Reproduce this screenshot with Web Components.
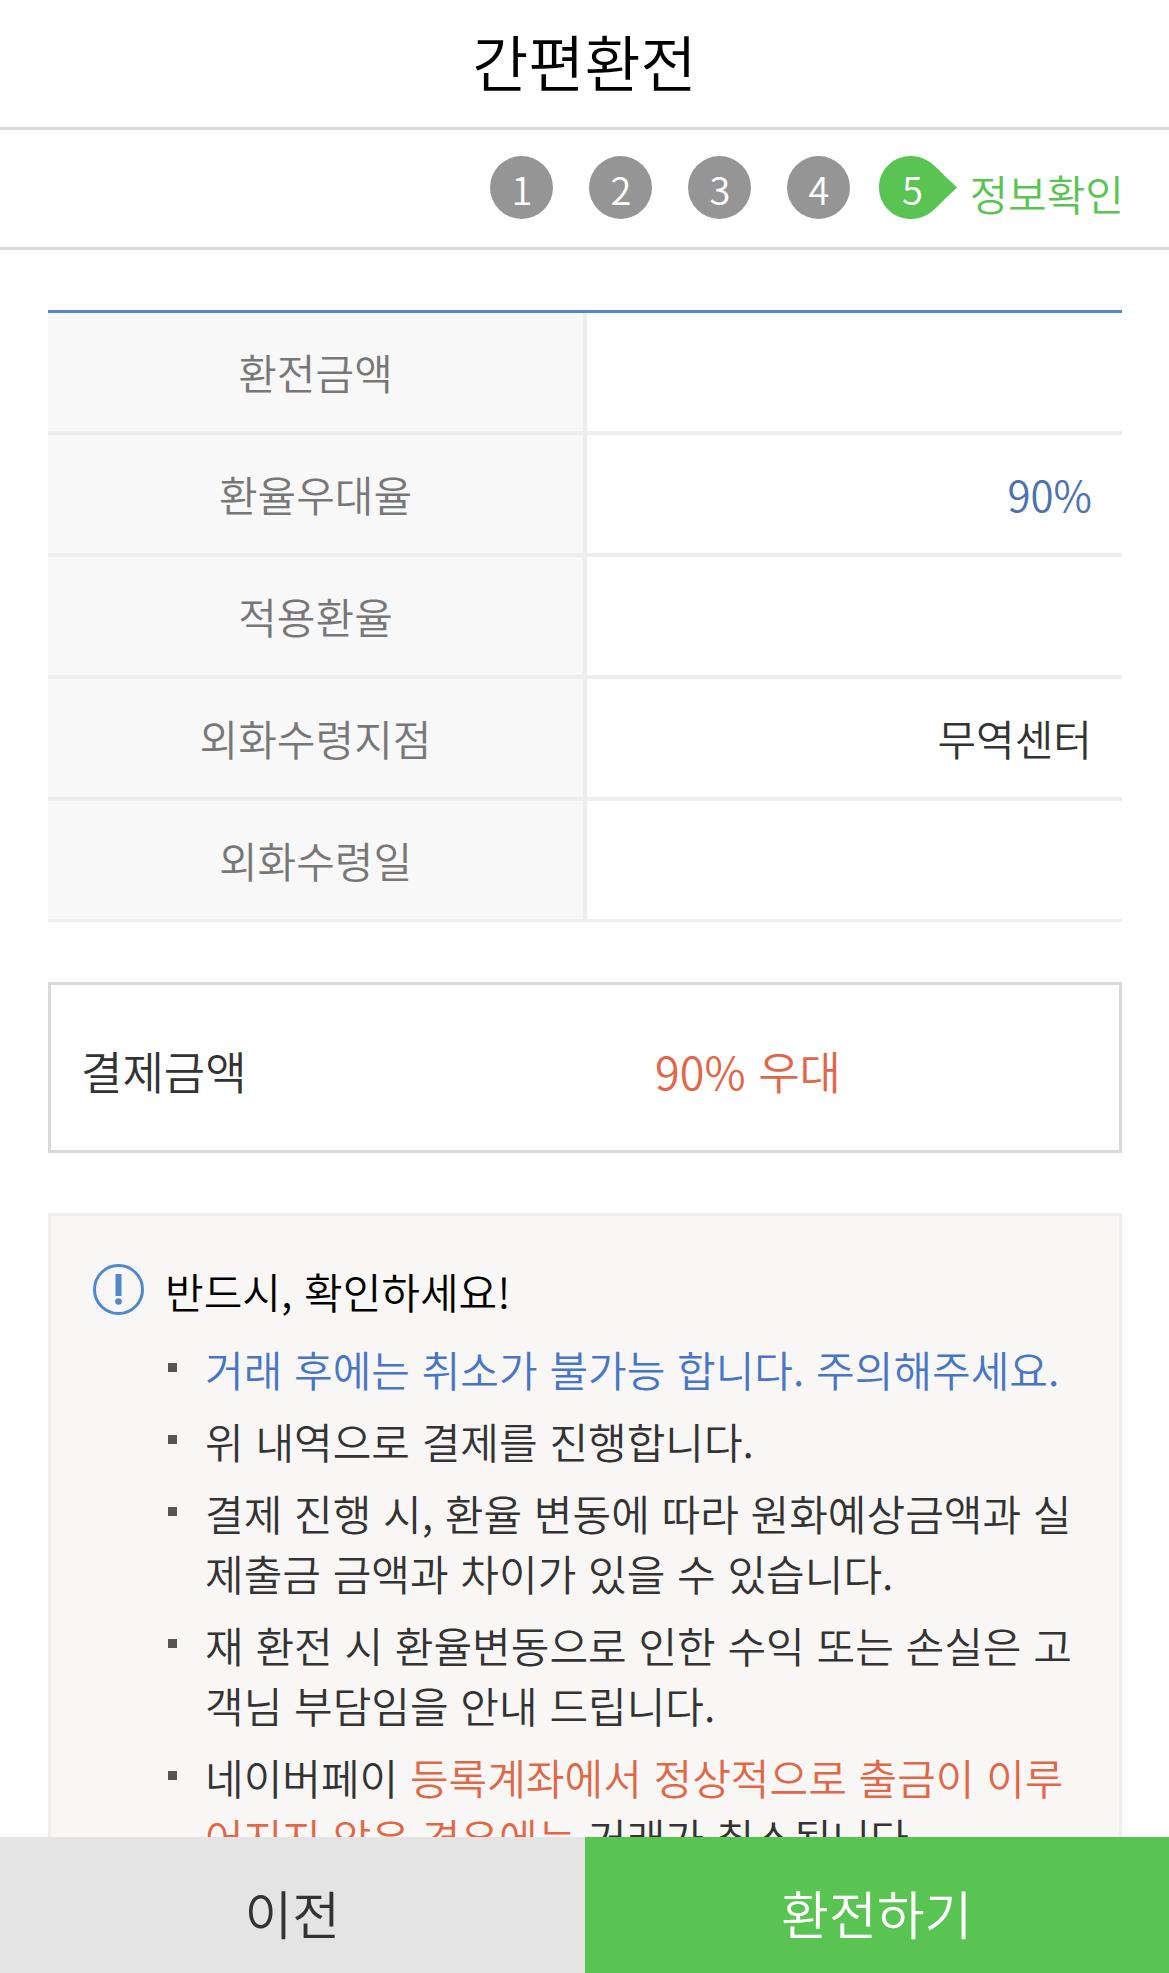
<!DOCTYPE html>
<html lang="ko">
<head>
<meta charset="utf-8">
<meta name="viewport" content="width=device-width, initial-scale=1">
<title>간편환전</title>
<style>
    html, body { margin: 0; height: 100%; }
    body { background: #fff; color: #333; font: 350 42px/60px "Noto Sans CJK KR DemiLight", "Noto Sans CJK KR", sans-serif; }
    .blue { color: #4876c4; }
    .red { color: #e06848; }
</style>
</head>
<body>
<exchange-page>
    <page-title slot="header">간편환전</page-title>
    <step-indicator slot="header" total="5" current="5">정보확인</step-indicator>

    <exchange-summary></exchange-summary>
    <payment-box rate="90% 우대">결제금액</payment-box>
    <notice-box heading="반드시, 확인하세요!">
        <notice-item><span class="blue">거래 후에는 취소가 불가능 합니다. 주의해주세요.</span></notice-item>
        <notice-item>위 내역으로 결제를 진행합니다.</notice-item>
        <notice-item>결제 진행 시, 환율 변동에 따라 원화예상금액과 실제출금 금액과 차이가 있을 수 있습니다.</notice-item>
        <notice-item>재 환전 시 환율변동으로 인한 수익 또는 손실은 고객님 부담임을 안내 드립니다.</notice-item>
        <notice-item>네이버페이 <span class="red">등록계좌에서 정상적으로 출금이 이루어지지 않은 경우에는</span> 거래가 취소됩니다.</notice-item>
    </notice-box>

    <action-button slot="footer">이전</action-button>
    <action-button slot="footer" primary>환전하기</action-button>
</exchange-page>

<script>
class ExchangePage extends HTMLElement {
    constructor() {
        super();
        this.attachShadow({ mode: 'open' });
        this.shadowRoot.innerHTML = `
            <style>
                :host { display: flex; flex-direction: column; height: 100vh; overflow: hidden; }
                main {
                    flex: 1; min-height: 0; overflow-y: auto; scrollbar-width: none;
                    display: grid; align-content: start; gap: 60px; padding: 60px 47px 60px 48px;
                }
                footer { display: grid; grid-template-columns: 1fr 1fr; }
            </style>
            <header><slot name="header"></slot></header>
            <main><slot></slot></main>
            <footer><slot name="footer"></slot></footer>
        `;
    }
}
customElements.define('exchange-page', ExchangePage);

class PageTitle extends HTMLElement {
    constructor() {
        super();
        this.attachShadow({ mode: 'open' });
        this.shadowRoot.innerHTML = `
            <style>
                :host { display: block; padding-bottom: 5px; border-bottom: 3px solid #dadada; color: #000; }
                h1 { margin: 0; font-size: 61px; line-height: 122px; font-weight: 400; text-align: center; }
            </style>
            <h1><slot></slot></h1>
        `;
    }
}
customElements.define('page-title', PageTitle);

class StepIndicator extends HTMLElement {
    constructor() {
        super();
        this.attachShadow({ mode: 'open' });
    }

    connectedCallback() {
        const total = parseInt(this.getAttribute('total')) || 1;
        const current = parseInt(this.getAttribute('current')) || 1;
        let items = '';
        for (let i = 1; i <= total; i++) {
            items += i === current
                ? `<li class="current" aria-current="step">
                       <svg viewBox="0 0 78 63" aria-hidden="true"><path d="M31.5 0C14 0 0 14 0 31.5S14 63 31.5 63C44 63 52 57 59 50C66 43 71 38 78 31.5C71 25 66 20 59 13C52 6 44 0 31.5 0Z"/></svg>
                       <span>${i}</span>
                   </li>`
                : `<li><span>${i}</span></li>`;
        }
        this.shadowRoot.innerHTML = `
            <style>
                :host {
                    display: flex; justify-content: flex-end; align-items: center; gap: 12px;
                    height: 115px; padding: 0 45px 2px 0; border-bottom: 3px solid #dadada; color: #5ac452;
                }
                ol { display: flex; gap: 36px; margin: 0; padding: 0; list-style: none; }
                li {
                    display: grid; width: 63px; height: 63px; border-radius: 50%;
                    background: #959595; color: #fff; font-size: 38px; font-weight: 300; line-height: 66px; text-align: center;
                }
                .current { width: 78px; margin-left: -7px; border-radius: 0; background: none; }
                .current > * { grid-area: 1 / 1; }
                .current span { width: 66px; }
                svg { width: 78px; height: 63px; fill: #5ac452; }
                .label { padding-top: 10px; }
            </style>
            <ol>${items}</ol>
            <span class="label"><slot></slot></span>
        `;
    }
}
customElements.define('step-indicator', StepIndicator);

class ExchangeSummary extends HTMLElement {
    constructor() {
        super();
        this.attachShadow({ mode: 'open' });
        this.rows = [
            { label: '환전금액', value: '' },
            { label: '환율우대율', value: '90%', accent: true },
            { label: '적용환율', value: '' },
            { label: '외화수령지점', value: '무역센터' },
            { label: '외화수령일', value: '' }
        ];
    }

    connectedCallback() {
        const rowsHTML = this.rows.map(row =>
            `<tr><th scope="row">${row.label}</th><td${row.accent ? ' class="accent"' : ''}>${row.value}</td></tr>`
        ).join('');
        this.shadowRoot.innerHTML = `
            <style>
                :host { display: block; border-top: 3px solid #5588c4; }
                table { width: 100%; table-layout: fixed; border-spacing: 0; font: inherit; }
                th, td { box-sizing: border-box; height: 122px; padding: 0; border: 0 solid #ededed; border-bottom-width: 4px; }
                tr:last-child > * { height: 121px; border-bottom-width: 3px; }
                th { border-right-width: 2px; background: #f8f8f8; color: #777; font-weight: inherit; }
                td { border-left-width: 2px; padding-right: 30px; text-align: right; }
                .accent { color: #4b73b0; }
            </style>
            <table><tbody>${rowsHTML}</tbody></table>
        `;
    }
}
customElements.define('exchange-summary', ExchangeSummary);

class PaymentBox extends HTMLElement {
    constructor() {
        super();
        this.attachShadow({ mode: 'open' });
    }

    connectedCallback() {
        this.shadowRoot.innerHTML = `
            <style>
                :host {
                    display: flex; align-items: center; height: 159px; padding: 6px 30px 0;
                    border: 3px solid #d9d9d9; font-size: 45px;
                }
                .label { flex: 1; }
                .rate { color: #e06848; }
                .amount { width: 248px; }
            </style>
            <span class="label"><slot></slot></span>
            <span class="rate">${this.getAttribute('rate') || ''}</span>
            <span class="amount"></span>
        `;
    }
}
customElements.define('payment-box', PaymentBox);

class NoticeBox extends HTMLElement {
    constructor() {
        super();
        this.attachShadow({ mode: 'open' });
    }

    connectedCallback() {
        this.shadowRoot.innerHTML = `
            <style>
                :host { display: block; padding: 45px 42px; border: 3px solid #eee; background: #f8f7f5; }
                .title { display: flex; gap: 21px; margin-bottom: 18px; color: #000; }
                svg { width: 51px; height: 51px; margin-top: 3px; }
                h2 { margin: 0; font: inherit; }
                ul { display: grid; gap: 12px; margin: 0; padding: 0 0 0 75px; list-style: none; }
            </style>
            <div class="title">
                <svg viewBox="0 0 51 51" aria-hidden="true">
                    <circle cx="25.5" cy="25.5" r="24" fill="none" stroke="#5088d0" stroke-width="3"/>
                    <rect x="22.5" y="10" width="6" height="22" fill="#5088d0"/>
                    <circle cx="25.5" cy="37.5" r="3.3" fill="#5088d0"/>
                </svg>
                <h2>${this.getAttribute('heading') || ''}</h2>
            </div>
            <ul role="list"><slot></slot></ul>
        `;
    }
}
customElements.define('notice-box', NoticeBox);

class NoticeItem extends HTMLElement {
    constructor() {
        super();
        this.attachShadow({ mode: 'open' });
        this.shadowRoot.innerHTML = `
            <style>
                :host { display: flex; gap: 28px; }
                i { flex: none; width: 9px; height: 9px; margin-top: 24px; background: #555; }
            </style>
            <i></i><span><slot></slot></span>
        `;
    }

    connectedCallback() {
        this.setAttribute('role', 'listitem');
    }
}
customElements.define('notice-item', NoticeItem);

class ActionButton extends HTMLElement {
    constructor() {
        super();
        this.attachShadow({ mode: 'open' });
        this.shadowRoot.innerHTML = `
            <style>
                :host { display: block; }
                button {
                    display: block; width: 100%; height: 136px; padding: 16px 0 0; border: 0;
                    background: #e4e4e4; color: #333; font: inherit; font-size: 52px; cursor: pointer;
                }
                :host([primary]) button { background: #5ac452; color: #fff; }
            </style>
            <button type="button"><slot></slot></button>
        `;
    }
}
customElements.define('action-button', ActionButton);
</script>
</body>
</html>
